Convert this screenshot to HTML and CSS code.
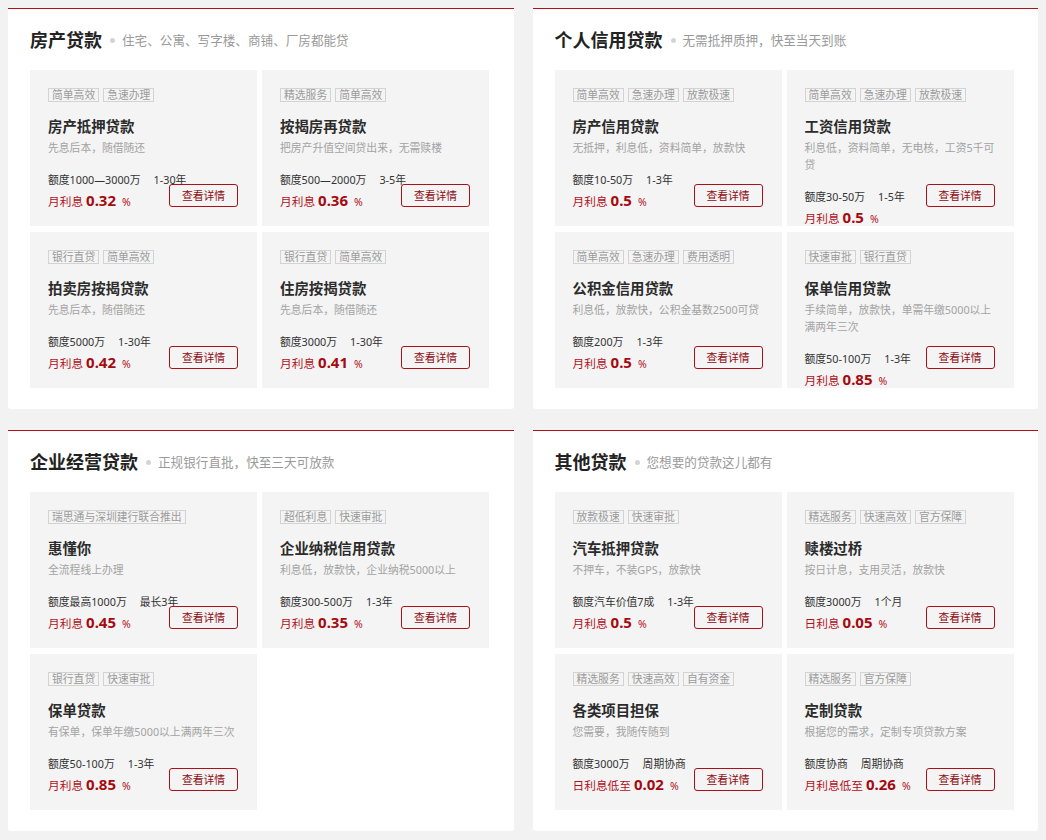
FILE: index.html
```html
<!DOCTYPE html>
<html lang="zh-CN">
<head>
<meta charset="utf-8">
<title>贷款产品</title>
<link rel="stylesheet" href="styles.css">
</head>
<body>
<div class="page">

  <section class="panel">
    <div class="panel-head">
      <h2 class="panel-title">房产贷款</h2><i class="dot"></i><span class="panel-sub">住宅、公寓、写字楼、商铺、厂房都能贷</span>
    </div>
    <div class="cards">
      <div class="card">
        <div class="tags"><span class="tag">简单高效</span><span class="tag">急速办理</span></div>
        <h3 class="card-title">房产抵押贷款</h3>
        <p class="desc">先息后本，随借随还</p>
        <p class="quota">额度1000—3000万<span class="term">1-30年</span></p>
        <p class="rate"><span class="rate-label">月利息</span><b class="num">0.32</b><span class="pct">%</span></p>
        <a class="btn">查看详情</a>
      </div>
      <div class="card">
        <div class="tags"><span class="tag">精选服务</span><span class="tag">简单高效</span></div>
        <h3 class="card-title">按揭房再贷款</h3>
        <p class="desc">把房产升值空间贷出来，无需赎楼</p>
        <p class="quota">额度500—2000万<span class="term">3-5年</span></p>
        <p class="rate"><span class="rate-label">月利息</span><b class="num">0.36</b><span class="pct">%</span></p>
        <a class="btn">查看详情</a>
      </div>
      <div class="card">
        <div class="tags"><span class="tag">银行直贷</span><span class="tag">简单高效</span></div>
        <h3 class="card-title">拍卖房按揭贷款</h3>
        <p class="desc">先息后本，随借随还</p>
        <p class="quota">额度5000万<span class="term">1-30年</span></p>
        <p class="rate"><span class="rate-label">月利息</span><b class="num">0.42</b><span class="pct">%</span></p>
        <a class="btn">查看详情</a>
      </div>
      <div class="card">
        <div class="tags"><span class="tag">银行直贷</span><span class="tag">简单高效</span></div>
        <h3 class="card-title">住房按揭贷款</h3>
        <p class="desc">先息后本，随借随还</p>
        <p class="quota">额度3000万<span class="term">1-30年</span></p>
        <p class="rate"><span class="rate-label">月利息</span><b class="num">0.41</b><span class="pct">%</span></p>
        <a class="btn">查看详情</a>
      </div>
    </div>
  </section>

  <section class="panel">
    <div class="panel-head">
      <h2 class="panel-title">个人信用贷款</h2><i class="dot"></i><span class="panel-sub">无需抵押质押，快至当天到账</span>
    </div>
    <div class="cards">
      <div class="card">
        <div class="tags"><span class="tag">简单高效</span><span class="tag">急速办理</span><span class="tag">放款极速</span></div>
        <h3 class="card-title">房产信用贷款</h3>
        <p class="desc">无抵押，利息低，资料简单，放款快</p>
        <p class="quota">额度10-50万<span class="term">1-3年</span></p>
        <p class="rate"><span class="rate-label">月利息</span><b class="num">0.5</b><span class="pct">%</span></p>
        <a class="btn">查看详情</a>
      </div>
      <div class="card">
        <div class="tags"><span class="tag">简单高效</span><span class="tag">急速办理</span><span class="tag">放款极速</span></div>
        <h3 class="card-title">工资信用贷款</h3>
        <p class="desc">利息低，资料简单，无电核，工资5千可贷</p>
        <p class="quota">额度30-50万<span class="term">1-5年</span></p>
        <p class="rate"><span class="rate-label">月利息</span><b class="num">0.5</b><span class="pct">%</span></p>
        <a class="btn">查看详情</a>
      </div>
      <div class="card">
        <div class="tags"><span class="tag">简单高效</span><span class="tag">急速办理</span><span class="tag">费用透明</span></div>
        <h3 class="card-title">公积金信用贷款</h3>
        <p class="desc">利息低，放款快，公积金基数2500可贷</p>
        <p class="quota">额度200万<span class="term">1-3年</span></p>
        <p class="rate"><span class="rate-label">月利息</span><b class="num">0.5</b><span class="pct">%</span></p>
        <a class="btn">查看详情</a>
      </div>
      <div class="card">
        <div class="tags"><span class="tag">快速审批</span><span class="tag">银行直贷</span></div>
        <h3 class="card-title">保单信用贷款</h3>
        <p class="desc">手续简单，放款快，单需年缴5000以上满两年三次</p>
        <p class="quota">额度50-100万<span class="term">1-3年</span></p>
        <p class="rate"><span class="rate-label">月利息</span><b class="num">0.85</b><span class="pct">%</span></p>
        <a class="btn">查看详情</a>
      </div>
    </div>
  </section>

  <section class="panel">
    <div class="panel-head">
      <h2 class="panel-title">企业经营贷款</h2><i class="dot"></i><span class="panel-sub">正规银行直批，快至三天可放款</span>
    </div>
    <div class="cards">
      <div class="card">
        <div class="tags"><span class="tag">瑞思通与深圳建行联合推出</span></div>
        <h3 class="card-title">惠懂你</h3>
        <p class="desc">全流程线上办理</p>
        <p class="quota">额度最高1000万<span class="term">最长3年</span></p>
        <p class="rate"><span class="rate-label">月利息</span><b class="num">0.45</b><span class="pct">%</span></p>
        <a class="btn">查看详情</a>
      </div>
      <div class="card">
        <div class="tags"><span class="tag">超低利息</span><span class="tag">快速审批</span></div>
        <h3 class="card-title">企业纳税信用贷款</h3>
        <p class="desc">利息低，放款快，企业纳税5000以上</p>
        <p class="quota">额度300-500万<span class="term">1-3年</span></p>
        <p class="rate"><span class="rate-label">月利息</span><b class="num">0.35</b><span class="pct">%</span></p>
        <a class="btn">查看详情</a>
      </div>
      <div class="card">
        <div class="tags"><span class="tag">银行直贷</span><span class="tag">快速审批</span></div>
        <h3 class="card-title">保单贷款</h3>
        <p class="desc">有保单，保单年缴5000以上满两年三次</p>
        <p class="quota">额度50-100万<span class="term">1-3年</span></p>
        <p class="rate"><span class="rate-label">月利息</span><b class="num">0.85</b><span class="pct">%</span></p>
        <a class="btn">查看详情</a>
      </div>
    </div>
  </section>

  <section class="panel">
    <div class="panel-head">
      <h2 class="panel-title">其他贷款</h2><i class="dot"></i><span class="panel-sub">您想要的贷款这儿都有</span>
    </div>
    <div class="cards">
      <div class="card">
        <div class="tags"><span class="tag">放款极速</span><span class="tag">快速审批</span></div>
        <h3 class="card-title">汽车抵押贷款</h3>
        <p class="desc">不押车，不装GPS，放款快</p>
        <p class="quota">额度汽车价值7成<span class="term">1-3年</span></p>
        <p class="rate"><span class="rate-label">月利息</span><b class="num">0.5</b><span class="pct">%</span></p>
        <a class="btn">查看详情</a>
      </div>
      <div class="card">
        <div class="tags"><span class="tag">精选服务</span><span class="tag">快速高效</span><span class="tag">官方保障</span></div>
        <h3 class="card-title">赎楼过桥</h3>
        <p class="desc">按日计息，支用灵活，放款快</p>
        <p class="quota">额度3000万<span class="term">1个月</span></p>
        <p class="rate"><span class="rate-label">日利息</span><b class="num">0.05</b><span class="pct">%</span></p>
        <a class="btn">查看详情</a>
      </div>
      <div class="card">
        <div class="tags"><span class="tag">精选服务</span><span class="tag">快速高效</span><span class="tag">自有资金</span></div>
        <h3 class="card-title">各类项目担保</h3>
        <p class="desc">您需要，我随传随到</p>
        <p class="quota">额度3000万<span class="term">周期协商</span></p>
        <p class="rate"><span class="rate-label">日利息低至</span><b class="num">0.02</b><span class="pct">%</span></p>
        <a class="btn">查看详情</a>
      </div>
      <div class="card">
        <div class="tags"><span class="tag">精选服务</span><span class="tag">官方保障</span></div>
        <h3 class="card-title">定制贷款</h3>
        <p class="desc">根据您的需求，定制专项贷款方案</p>
        <p class="quota">额度协商<span class="term">周期协商</span></p>
        <p class="rate"><span class="rate-label">月利息低至</span><b class="num">0.26</b><span class="pct">%</span></p>
        <a class="btn">查看详情</a>
      </div>
    </div>
  </section>

</div>
</body>
</html>
```

FILE: styles.css
```css
html, body {
  margin: 0;
  padding: 0;
}

body {
  margin: 8px;
  background: #f2f2f2;
  font-family: "Noto Sans", "Noto Sans CJK SC", sans-serif;
  color: #333;
}

.page {
  display: grid;
  grid-template-columns: 1fr 1fr;
  column-gap: 19px;
  row-gap: 21px;
}

.panel {
  background: #ffffff;
  border-top: 1px solid #b0101a;
  border-radius: 0 0 3px 3px;
  padding: 19px 0 21px 22px;
}

.panel-head {
  display: flex;
  align-items: center;
  height: 24px;
  margin-bottom: 18px;
}

.panel-title {
  margin: 0;
  font-size: 18px;
  line-height: 24px;
  font-weight: bold;
  color: #222;
}

.dot {
  display: block;
  width: 5px;
  height: 5px;
  border-radius: 50%;
  background: #d4d4d4;
  margin: 1px 7px 0 8px;
}

.panel-sub {
  font-size: 12.6px;
  line-height: 24px;
  color: #9a9a9a;
  padding-top: 1px;
}

.cards {
  display: grid;
  grid-template-columns: 227px 227px;
  column-gap: 5px;
  row-gap: 6px;
}

.card {
  position: relative;
  height: 156px;
  box-sizing: border-box;
  background: #f4f4f4;
  padding: 18px 18px 0 18px;
  overflow: hidden;
}

.tags {
  display: flex;
  gap: 4px;
  height: 14px;
}

.tag {
  font-size: 10.8px;
  line-height: 12px;
  height: 12px;
  border: 1px solid #d3d3d3;
  padding: 0 3px;
  color: #9b9b9b;
  white-space: nowrap;
}

.card-title {
  margin: 15px 0 0;
  font-size: 14.4px;
  line-height: 20px;
  font-weight: bold;
  color: #2b2b2b;
}

.desc {
  margin: 2px 0 0;
  font-size: 10.8px;
  line-height: 17px;
  color: #a3a3a3;
}

.quota {
  margin: 15px 0 0;
  font-size: 10.8px;
  line-height: 17px;
  color: #333;
}

.term {
  margin-left: 13px;
}

.rate {
  margin: 1px 0 0;
  line-height: 22px;
  height: 22px;
  color: #b3121c;
  white-space: nowrap;
}

.rate-label {
  font-size: 11.7px;
}

.num {
  font-size: 15px;
  font-weight: bold;
  color: #a50a10;
  margin: 0 6px 0 3px;
}

.pct {
  font-size: 10.5px;
}

.btn {
  position: absolute;
  top: 114px;
  right: 19px;
  width: 69px;
  height: 23px;
  box-sizing: border-box;
  border: 1px solid #a8101a;
  border-radius: 3px;
  font-size: 10.8px;
  line-height: 21px;
  text-align: center;
  color: #8e0c12;
  cursor: pointer;
}
```
